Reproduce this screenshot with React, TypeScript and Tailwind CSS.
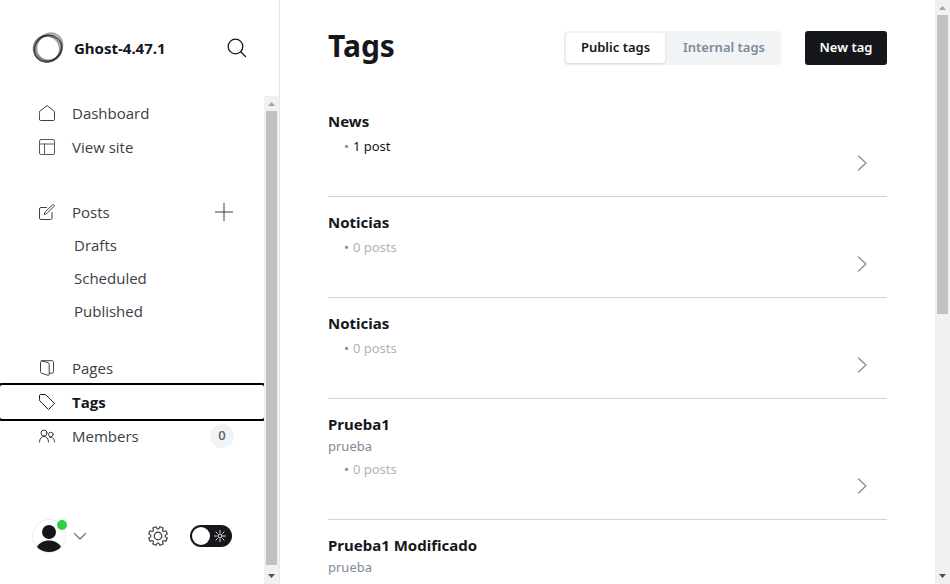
import type { ReactNode } from 'react';

type IconProps = { children: ReactNode; className?: string };

function NavIcon({ children, className = 'text-[#394047]' }: IconProps) {
  return (
    <svg
      viewBox="0 0 16 16"
      className={`size-4 shrink-0 ${className}`}
      fill="none"
      stroke="currentColor"
      strokeWidth="1"
      strokeLinecap="round"
      strokeLinejoin="round"
      aria-hidden="true"
    >
      {children}
    </svg>
  );
}

const icons = {
  home: <path d="M.5 6.5 8 .5l7.500 6v8a1 1 0 0 1-1 1h-13a1 1 0 0 1-1-1z" />,
  site: (
    <g opacity=".85">
      <rect x=".5" y=".5" width="15" height="15" rx="1.500" />
      <path d="M.5 5h15M5.500 5v10.500" />
    </g>
  ),
  posts: (
    <>
      <path d="M7.500 3.500H2A1.500 1.500 0 0 0 .5 5v9A1.500 1.500 0 0 0 2 15.500h9.500A1.500 1.500 0 0 0 13 14V8.500" />
      <path d="m6.200 8 7-7c.5-.5 1.100-.5 1.600 0s.5 1.100 0 1.600l-7 7-2.300.7z" />
    </>
  ),
  pages: (
    <>
      <path d="M1.500 2c0-1 .6-1.200 1.500-1l6 1.600c.8.2 1.200.7 1.200 1.500v10.200c0 .8-.4 1.200-1.200 1l-6.400-2.100c-.7-.2-1.100-.7-1.100-1.400z" />
      <path d="M2.500.7H13c1 0 1.500.5 1.500 1.500v9.500c0 1-.5 1.500-1.500 1.500h-2.500" />
    </>
  ),
  tags: <path d="M.5 1.500a1 1 0 0 1 1-1h4.500c.4 0 .7.100 1 .4l8.500 8.600-6 6L.9 7C.6 6.700.5 6.400.5 6z" />,
  members: (
    <>
      <circle cx="5" cy="5" r="3" />
      <path d="M.5 14c0-3.200 1.700-5.500 4.500-5.500s4.500 2.300 4.500 5.500" />
      <circle cx="11.800" cy="6.500" r="2.300" />
      <path d="M10.800 9.500c2.900-.7 4.700 1.300 4.700 4.500" />
    </>
  ),
};

function NavItem({ icon, label, active, children }: { icon: ReactNode; label: string; active?: boolean; children?: ReactNode }) {
  return (
    <li className="flex h-[34px] items-center">
      <a
        href="#"
        aria-current={active ? 'page' : undefined}
        className={`flex h-full flex-1 items-center gap-[17px] pl-[39px] ${
          active ? 'rounded-xs font-bold text-[#15171a] outline-2 outline-black' : ''
        }`}
      >
        <NavIcon className={active ? 'text-[#15171a]' : 'text-[#394047]'}>{icon}</NavIcon>
        {label}
      </a>
      {children}
    </li>
  );
}

function SubItem({ label }: { label: string }) {
  return (
    <li>
      <a href="#" className="flex h-[33px] items-center pl-[74px]">
        {label}
      </a>
    </li>
  );
}

function ScrollBar({ thumb }: { thumb: string }) {
  return (
    <div className="flex w-[15px] shrink-0 flex-col items-center bg-[#f1f1f1]" aria-hidden="true">
      <svg viewBox="0 0 15 15" className="size-[15px] shrink-0">
        <path d="M4 10h7L7.500 6z" fill="#a3a3a3" />
      </svg>
      <div className="min-h-0 w-full flex-1 px-[2px]">
        <div className={`bg-[#c1c1c1] ${thumb}`} />
      </div>
      <svg viewBox="0 0 15 15" className="mt-1 size-[15px] shrink-0">
        <path d="M4 5h7L7.500 9z" fill="#505050" />
      </svg>
    </div>
  );
}

function Logo() {
  return (
    <svg viewBox="0 0 32 32" className="size-8" fill="none" stroke="#15171a" aria-hidden="true">
      <ellipse cx="15.500" cy="16.500" rx="14" ry="13.200" strokeWidth="1.800" opacity=".4" />
      <ellipse cx="15" cy="17" rx="12.800" ry="13" strokeWidth="1.800" opacity=".4" />
      <ellipse cx="17.500" cy="14.800" rx="12.500" ry="14" strokeWidth="1.800" opacity=".4" transform="rotate(35 17.500 14.800)" />
      <ellipse cx="16" cy="16.500" rx="14.300" ry="12.400" strokeWidth="1.600" opacity=".5" transform="rotate(-40 16 16.500)" />
      <ellipse cx="16.500" cy="16" rx="13.500" ry="13" strokeWidth="1" opacity=".5" />
    </svg>
  );
}

function Sidebar() {
  return (
    <aside className="flex w-[280px] shrink-0 flex-col border-r border-[#e5e7e9]">
      <header className="flex h-24 shrink-0 items-center pr-8 pl-8">
        <Logo />
        <span className="ml-[10px] flex-1 text-[15px] font-bold text-[#15171a]">Ghost-4.47.1</span>
        <button type="button" aria-label="Search">
          <svg viewBox="0 0 20 20" className="size-5" fill="none" stroke="#15171a" strokeWidth="1.300" strokeLinecap="round" aria-hidden="true">
            <circle cx="8.500" cy="8.500" r="7.300" />
            <path d="m13.700 13.700 4.800 4.800" />
          </svg>
        </button>
      </header>
      <div className="flex min-h-0 flex-1">
        <div className="flex min-w-0 flex-1 flex-col overflow-hidden">
          <nav className="font-['Open_Sans',sans-serif] text-[15px] text-[#394047]">
            <ul>
              <NavItem icon={icons.home} label="Dashboard" />
              <NavItem icon={icons.site} label="View site" />
            </ul>
            <ul className="mt-[31px]">
              <NavItem icon={icons.posts} label="Posts">
                <button type="button" aria-label="New post" className="mr-[31px]">
                  <svg viewBox="0 0 18 18" className="size-[18px]" stroke="#394047" strokeWidth="1" aria-hidden="true">
                    <path d="M9 0v18M0 9h18" />
                  </svg>
                </button>
              </NavItem>
              <SubItem label="Drafts" />
              <SubItem label="Scheduled" />
              <SubItem label="Published" />
            </ul>
            <ul className="mt-[23px]">
              <NavItem icon={icons.pages} label="Pages" />
              <NavItem icon={icons.tags} label="Tags" active />
              <NavItem icon={icons.members} label="Members">
                <span className="mr-[30px] flex size-6 items-center justify-center rounded-full bg-[#f1f3f4] text-[13px] font-semibold text-[#5d6570]">
                  0
                </span>
              </NavItem>
            </ul>
          </nav>
          <footer className="mt-auto flex h-24 items-center pr-8 pl-8">
            <button type="button" className="flex items-center gap-[6px]" aria-label="Account menu">
              <svg viewBox="0 0 36 34" className="h-[34px] w-9" aria-hidden="true">
                <circle cx="17" cy="17" r="16.500" fill="#fff" stroke="#e5e7e9" strokeWidth=".8" />
                <circle cx="17" cy="13" r="7" fill="#15171a" />
                <path d="M5 28c2-4 6.500-6.500 12-6.500s10 2.500 12 6.500c-3 3.500-7.500 5-12 5s-9-1.500-12-5z" fill="#15171a" />
                <circle cx="30" cy="6" r="5" fill="#30cf43" />
              </svg>
              <svg viewBox="0 0 12 8" className="h-2 w-3" fill="none" stroke="#626d79" strokeWidth="1.100" strokeLinecap="round" strokeLinejoin="round" aria-hidden="true">
                <path d="m.5 1.500 5.500 5.500 5.500-5.500" />
              </svg>
            </button>
            <a href="#" className="mr-[22px] ml-auto" aria-label="Settings">
              <svg viewBox="-10 -10 20 20" className="size-5" fill="none" stroke="#394047" strokeWidth="1.200" strokeLinejoin="round" aria-hidden="true">
                <circle r="3.800" />
                <path d="M-2-9.300Q0-4.600 2-9.300L5.200-8Q3.200-3.200 8-5.200L9.300-2Q4.600 0 9.300 2L8 5.200Q3.200 3.200 5.200 8L2 9.300Q0 4.600-2 9.300L-5.200 8Q-3.200 3.200-8 5.200L-9.300 2Q-4.600 0-9.300-2L-8-5.200Q-3.200-3.200-5.200-8Z" />
              </svg>
            </a>
            <button type="button" role="switch" aria-checked="false" aria-label="Night shift" className="flex h-[22px] w-[42px] items-center justify-between rounded-full bg-[#15171a] pr-[6px] pl-[2px]">
              <span className="size-[18px] rounded-full bg-white" />
              <svg viewBox="-6 -6 12 12" className="size-3" fill="none" stroke="#fff" strokeWidth=".9" strokeLinecap="round" aria-hidden="true">
                <circle r="2" />
                <path d="M0-5.500v2M0 3.500v2M-5.500 0h2M3.500 0h2M-4-4l1.300 1.300M2.700 2.700 4 4M-4 4l1.300-1.300M2.700-2.700 4-4" />
              </svg>
            </button>
          </footer>
        </div>
        <ScrollBar thumb="h-full" />
      </div>
    </aside>
  );
}

type Tag = { name: string; description?: string; count?: number };

const tags: Tag[] = [
  { name: 'News', count: 1 },
  { name: 'Noticias', count: 0 },
  { name: 'Noticias', count: 0 },
  { name: 'Prueba1', description: 'prueba', count: 0 },
  { name: 'Prueba1 Modificado', description: 'prueba' },
];

function TagRow({ name, description, count }: Tag) {
  return (
    <li className="border-b border-[#ced4d9]">
      <a href="#" className="flex items-end">
        <div className="flex-1 pt-[13px] pb-10">
          <h3 className="text-[15px] leading-6 font-bold text-[#15171a]">{name}</h3>
          {description && <p className="text-[13px] leading-5 text-[#7c8b9a]">{description}</p>}
          <div className="mt-[3px] h-5 pl-4 text-[13px] leading-5">
            {count !== undefined && (
              <p className="flex gap-1">
                <span className="text-[#7c8b9a]">•</span>
                <span className={count ? 'text-[#15171a]' : 'text-[#abb4be]'}>
                  {count} {count === 1 ? 'post' : 'posts'}
                </span>
              </p>
            )}
          </div>
        </div>
        <svg viewBox="0 0 10 16" className="mr-5 mb-[25px] h-4 w-[10px]" fill="none" stroke="#7c8b9a" strokeWidth="1.200" strokeLinecap="round" strokeLinejoin="round" aria-hidden="true">
          <path d="m1.500 1 7.500 7-7.500 7" />
        </svg>
      </a>
    </li>
  );
}

export default function App() {
  return (
    <div className="flex h-screen overflow-hidden bg-white font-['Noto_Sans',sans-serif]">
      <Sidebar />
      <main className="flex-1 overflow-hidden px-12">
        <header className="flex h-24 items-center justify-between">
          <h1 className="pb-[6px] text-[30px] font-bold text-[#15171a]">Tags</h1>
          <div className="flex gap-6 text-[13px] font-semibold">
            <div className="flex h-[34px] gap-1 rounded-[3px] bg-[#f1f3f4] p-[2px]">
              <button type="button" className="w-[99px] rounded-[3px] bg-white text-[#15171a] shadow-sm">
                Public tags
              </button>
              <button type="button" className="w-[110px] text-[#7c8b9a]">
                Internal tags
              </button>
            </div>
            <button type="button" className="h-[34px] w-[82px] rounded-[3px] bg-[#15171a] text-white">
              New tag
            </button>
          </div>
        </header>
        <ul>
          {tags.map((tag, index) => (
            <TagRow key={index} {...tag} />
          ))}
        </ul>
      </main>
      <ScrollBar thumb="h-[299px]" />
    </div>
  );
}
